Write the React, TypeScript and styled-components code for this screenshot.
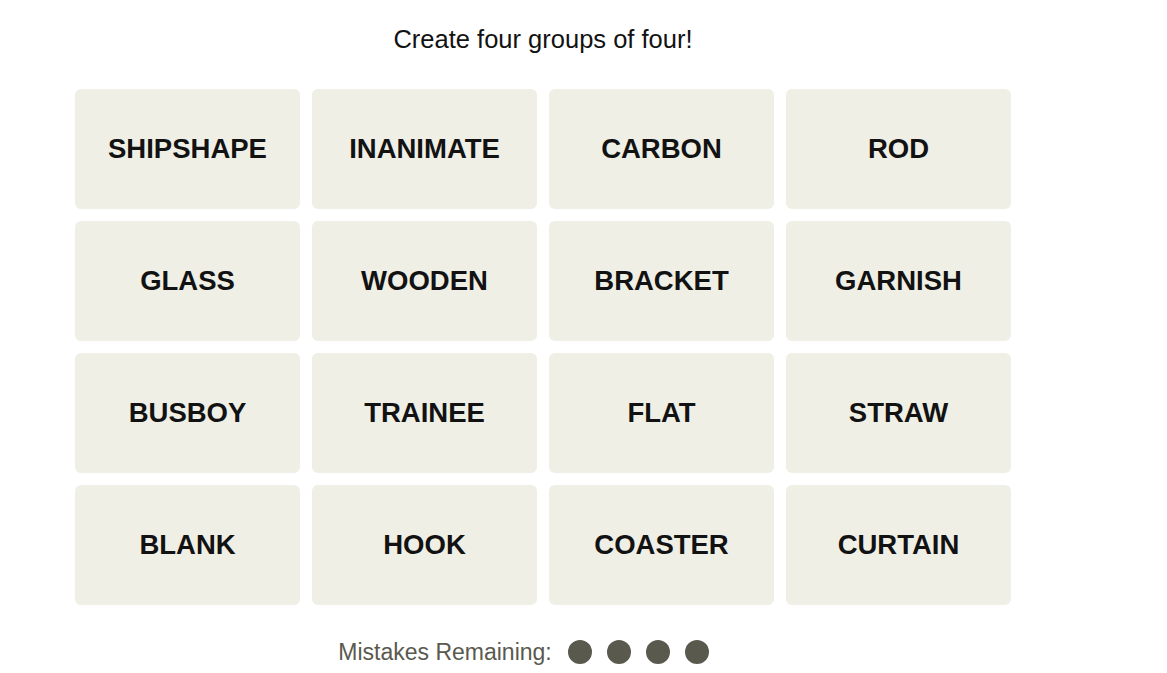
import styled, { createGlobalStyle } from "styled-components";

const words = [
  "SHIPSHAPE",
  "INANIMATE",
  "CARBON",
  "ROD",
  "GLASS",
  "WOODEN",
  "BRACKET",
  "GARNISH",
  "BUSBOY",
  "TRAINEE",
  "FLAT",
  "STRAW",
  "BLANK",
  "HOOK",
  "COASTER",
  "CURTAIN",
];

const mistakesLeft = 4;

const GlobalStyle = createGlobalStyle`
  html, body {
    margin: 0;
    padding: 0;
    background: #ffffff;
  }
  body {
    font-family: "Liberation Sans", Arial, sans-serif;
    color: #121212;
  }
`;

const App: React.FC = () => {
  return (
    <>
      <GlobalStyle />
      <Page>
        <Board>
          <Prompt>Create four groups of four!</Prompt>
          <Grid>
            {words.map((w) => (
              <Tile key={w}>{w}</Tile>
            ))}
          </Grid>
          <MistakesRow>
            <MistakesLabel>Mistakes Remaining:</MistakesLabel>
            <Dots>
              {Array.from({ length: mistakesLeft }).map((_, i) => (
                <Dot key={i} />
              ))}
            </Dots>
          </MistakesRow>
        </Board>
      </Page>
    </>
  );
};

export default App;

const Page = styled.main`
  width: 100%;
  padding: 0 0 0 75px;
  box-sizing: border-box;
`;

const Board = styled.section`
  width: 936px;
  display: flex;
  flex-direction: column;
  align-items: center;
`;

const Prompt = styled.h2`
  margin: 0;
  padding-top: 24px;
  height: 89px;
  box-sizing: border-box;
  font-size: 25.5px;
  font-weight: 400;
  line-height: 30px;
  color: #121212;
`;

const Grid = styled.div`
  display: grid;
  grid-template-columns: repeat(4, 225px);
  grid-auto-rows: 120px;
  gap: 12px;
`;

const Tile = styled.button`
  border: none;
  border-radius: 6px;
  background: #efefe6;
  color: #121212;
  font-family: "Liberation Sans", Arial, sans-serif;
  font-size: 27.5px;
  font-weight: 700;
  display: flex;
  align-items: center;
  justify-content: center;
  padding: 0;
  cursor: pointer;
`;

const MistakesRow = styled.div`
  display: flex;
  align-items: center;
  height: 94px;
`;

const MistakesLabel = styled.p`
  margin: 0 16px 0 0;
  font-size: 23px;
  color: #5a594e;
`;

const Dots = styled.div`
  display: flex;
  gap: 15px;
  padding-right: 39px;
`;

const Dot = styled.span`
  width: 24px;
  height: 24px;
  border-radius: 50%;
  background: #5a594e;
`;
